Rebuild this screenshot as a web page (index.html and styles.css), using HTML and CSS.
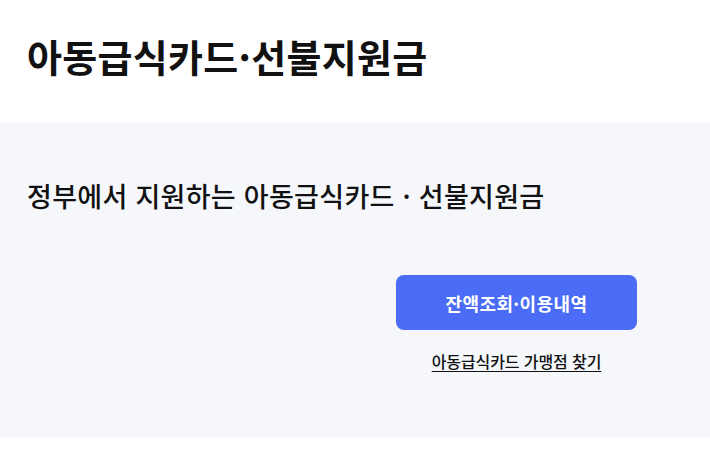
FILE: index.html
```html
<!DOCTYPE html>
<html lang="ko">
<head>
<meta charset="utf-8">
<link rel="stylesheet" href="styles.css">
</head>
<body>
<header class="page-header">
  <h1 class="page-title">아동급식카드·선불지원금</h1>
</header>
<section class="intro">
  <h2 class="intro-title">정부에서 지원하는 아동급식카드 · 선불지원금</h2>
  <div class="actions">
    <a class="btn-primary" href="#">잔액조회·이용내역</a>
    <a class="link-store" href="#">아동급식카드 가맹점 찾기</a>
  </div>
</section>
</body>
</html>
```

FILE: styles.css
```css
* { box-sizing: border-box; }
html, body { margin: 0; padding: 0; background: #fff; }
body {
  font-family: "Noto Sans CJK KR", "Noto Sans", sans-serif;
  color: #111;
}
.page-header {
  height: 122px;
  display: flex;
  align-items: center;
  padding: 0 27px 10px;
}
.page-title {
  margin: 0;
  font-size: 38px;
  font-weight: 700;
  letter-spacing: 0.3px;
  color: #111;
  line-height: 1;
}
.intro {
  background: #f5f7fb;
  height: 315px;
  padding: 52px 27px 0;
}
.intro-title {
  margin: 0;
  font-size: 27px;
  font-weight: 500;
  line-height: 44px;
  letter-spacing: 0.3px;
  color: #111;
}
.actions {
  margin-top: 57px;
  display: flex;
  flex-direction: column;
  align-items: center;
  width: 241px;
  margin-left: auto;
  margin-right: 46px;
}
.btn-primary {
  width: 241px;
  height: 55px;
  border-radius: 8px;
  background: #4a6cf7;
  color: #fff;
  font-size: 18px;
  font-weight: 700;
  letter-spacing: 0.4px;
  text-decoration: none;
  display: flex;
  align-items: center;
  justify-content: center;
}
.link-store {
  margin-top: 19px;
  font-size: 16px;
  font-weight: 500;
  letter-spacing: -0.1px;
  color: #111;
  text-decoration: underline;
  text-underline-offset: 3px;
}
```
